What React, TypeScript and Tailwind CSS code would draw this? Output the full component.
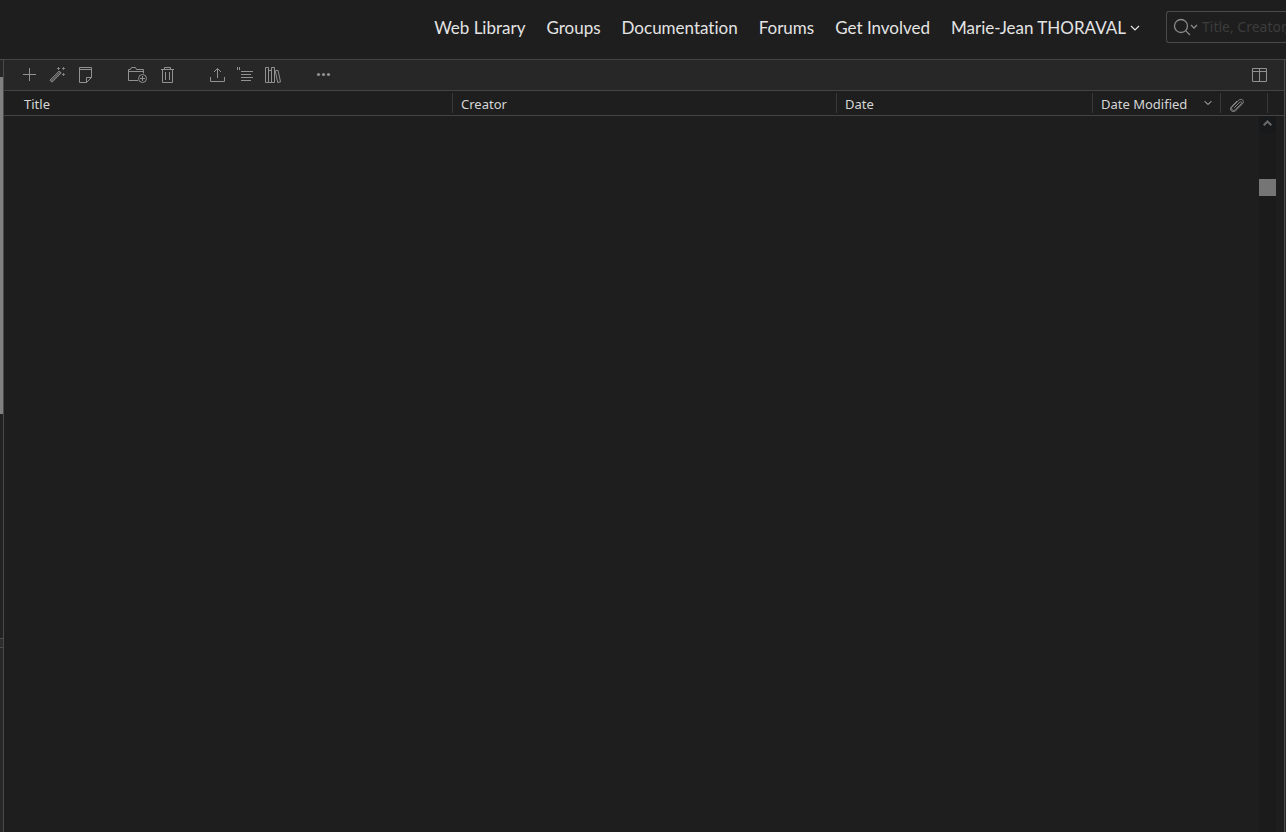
import type React from "react"
import { ChevronDown } from "lucide-react"

const navLinks = ["Web Library", "Groups", "Documentation", "Forums", "Get Involved"]

function Icon({ width = 16, children }: { width?: number; children: React.ReactNode }) {
  return (
    <svg
      width={width}
      height={16}
      viewBox={`0 0 ${width} 16`}
      fill="none"
      stroke="currentColor"
      className="shrink-0"
      aria-hidden="true"
    >
      {children}
    </svg>
  )
}

function ToolButton({ label, wide, children }: { label: string; wide?: boolean; children: React.ReactNode }) {
  return (
    <button
      type="button"
      aria-label={label}
      className={`${wide ? "w-8" : "w-7"} flex h-7 items-center justify-center hover:bg-white/5`}
    >
      {children}
    </button>
  )
}

function Header() {
  return (
    <header className="flex h-[59px] shrink-0 items-center justify-end pb-1">
      <nav className="flex items-center gap-[21px] font-['Lato',sans-serif] text-[17px] whitespace-nowrap text-[#e4e4e4] [font-variant-ligatures:none]">
        {navLinks.map((link) => (
          <a key={link} href="#" className="hover:text-white">
            {link}
          </a>
        ))}
        <button type="button" className="flex items-center gap-1">
          Marie-Jean THORAVAL
          <svg width="10" height="6" viewBox="0 0 10 6" fill="none" stroke="currentColor" strokeWidth="1.2">
            <path d="M1 1l4 4 4-4" />
          </svg>
        </button>
      </nav>

      <div className="mb-0.5 ml-[26px] flex h-8 w-[120px] items-center rounded-l-[3px] border border-r-0 border-[#4a4a4a] pl-1.5">
        <button type="button" aria-label="Search mode" className="flex shrink-0 items-center text-[#8a8a8a]">
          <svg width="25" height="18" viewBox="0 0 25 18" fill="none" stroke="currentColor" strokeWidth="1.3">
            <circle cx="8" cy="8" r="6.5" />
            <path d="M12.6 12.6L17 17M18 7l3 3 3-3" />
          </svg>
        </button>
        <input
          type="text"
          aria-label="Search"
          placeholder="Title, Creator, Year"
          className="ml-1 min-w-0 flex-1 bg-transparent font-['Noto_Sans',sans-serif] text-sm text-[#d0d0d0] outline-none placeholder:text-[#3c3c3c]"
        />
      </div>
    </header>
  )
}

function Toolbar() {
  return (
    <div className="flex h-8 items-center justify-between border-y border-[#444] bg-[#272727] pr-2.5 pl-[11px] text-[#919191]">
      <div className="flex gap-[22px]">
        <div className="flex">
          <ToolButton label="New Item">
            <Icon>
              <path d="M8.5 1v13M2 7.5h13" />
            </Icon>
          </ToolButton>
          <ToolButton label="Add by Identifier">
            <Icon>
              <path d="M1 13.2L10.2 4l2 2L3 15.2z" />
              <path d="M2.2 14L11 5.2" strokeWidth="1.4" opacity="0.65" />
              <path d="M8 1.5h3M9.5 0v3M13 1.5h3M14.5 0v3M13 7.5h3M14.5 6v3" strokeWidth="0.8" />
            </Icon>
          </ToolButton>
          <ToolButton label="New Note">
            <Icon>
              <path d="M2.5.5h12v10l-5 5h-7zM2.5 2.5h12M14.5 10.5h-5v5" />
            </Icon>
          </ToolButton>
        </div>

        <div className="flex">
          <ToolButton label="Add to Collection" wide>
            <Icon width={20}>
              <path d="M11 13.5H1.5v-11h2l1-2h4l1 2h7v4M1.5 4.5h15" />
              <circle cx="15.5" cy="11.5" r="4" />
              <path d="M13 11.5h5M15.5 9v5" />
            </Icon>
          </ToolButton>
          <ToolButton label="Move to Trash">
            <Icon>
              <path d="M2 2.5h13M5.5 2.5v-2h6v2M3.5 2.5v13h10v-13M6.5 5v8M10.5 5v8" />
            </Icon>
          </ToolButton>
        </div>

        <div className="flex">
          <ToolButton label="Export">
            <Icon>
              <path d="M1.5 10v4.5h14V10M8.5 11V1.5M5 5l3.5-3.5L12 5" />
            </Icon>
          </ToolButton>
          <ToolButton label="Create Citations">
            <Icon>
              <path d="M.5 0v3M2.5 0v3M4 4.5h12M4 7.5h10M4 10.5h12M4 13.5h10" />
            </Icon>
          </ToolButton>
          <ToolButton label="Create Bibliography">
            <Icon>
              <path d="M.5.5h3v15h-3zM3.5 3.5h3v12h-3zM6.5.5h3v15h-3zM10.2 3.8l2.8-.5 2.5 11.6-2.8.6z" />
            </Icon>
          </ToolButton>
        </div>

        <ToolButton label="More">
          <Icon>
            <g fill="currentColor" stroke="none">
              <circle cx="3.5" cy="7.5" r="1.6" />
              <circle cx="8.5" cy="7.5" r="1.6" />
              <circle cx="13.5" cy="7.5" r="1.6" />
            </g>
          </Icon>
        </ToolButton>
      </div>

      <ToolButton label="Column Selector">
        <Icon>
          <path d="M.5 1.5h14v13H.5zM.5 4.5h14M7.5 1.5v13" />
        </Icon>
      </ToolButton>
    </div>
  )
}

function ItemsTable() {
  return (
    <table className="w-full table-fixed border-collapse text-left text-[13px] text-[#d6d6d6]">
      <colgroup>
        <col className="w-[35%]" />
        <col className="w-[30%]" />
        <col className="w-[20%]" />
        <col className="w-[10%]" />
        <col />
        <col className="w-[17px]" />
      </colgroup>
      <thead>
        <tr className="h-6 border-b border-[#444]">
          <th className="p-0 font-normal">
            <div className="h-5 pl-5 leading-[22px]">Title</div>
          </th>
          <th className="p-0 font-normal">
            <div className="h-5 border-l border-[#383838] pl-2 leading-[22px]">Creator</div>
          </th>
          <th className="p-0 font-normal">
            <div className="h-5 border-l border-[#383838] pl-2 leading-[22px]">Date</div>
          </th>
          <th className="p-0 font-normal">
            <div className="flex h-5 items-start justify-between border-l border-[#383838] pr-1.5 pl-2 leading-[22px] whitespace-nowrap">
              Date Modified
              <ChevronDown size={12} className="mt-1" />
            </div>
          </th>
          <th className="p-0 font-normal" aria-label="Attachments">
            <div className="flex h-5 items-center border-l border-[#383838] pt-1 pl-2 text-[#919191]">
              <Icon>
                <path
                  d="M5.2 10.8l5.6-5.6c1.1-1.1 2.6.3 1.5 1.4l-6.2 6.2c-2 2-4.9-.9-2.9-2.9l6.6-6.6c2.7-2.7 6.2.8 3.7 3.5l-6.8 6.8c-3.2 2.8-6.8-.8-4.3-3.9l5.8-5.8"
                  strokeWidth="0.9"
                />
              </Icon>
            </div>
          </th>
          <th className="p-0">
            <div className="h-5 border-l border-[#383838]" />
          </th>
        </tr>
      </thead>
      <tbody />
    </table>
  )
}

export default function App() {
  return (
    <div className="flex h-screen flex-col overflow-hidden bg-[#1e1e1e] font-['Noto_Sans',sans-serif]">
      <Header />

      <div className="flex min-h-0 flex-1">
        {/* edge of the collections pane and its scrollbar */}
        <aside className="flex w-1 shrink-0 flex-col border-t border-r border-[#4a4a4a]">
          <div className="h-[17px] bg-[#272727]" />
          <div className="h-[337px] bg-[#808080]" />
          <div className="h-56 bg-[#222]" />
          <div className="h-2.5 border-y border-[#4a4a4a] bg-[#2d2d2d]" />
          <div className="flex-1 bg-[#272727]" />
        </aside>

        <main className="flex min-w-0 flex-1 flex-col">
          <Toolbar />
          <ItemsTable />
          <div className="flex flex-1 justify-end pr-2">
            <div className="flex w-[17px] flex-col bg-[#1b1b1b]">
              <button
                type="button"
                aria-label="Scroll up"
                className="flex h-[17px] items-center justify-center bg-[#18191a] pb-0.5 text-[#6a6a6a]"
              >
                <svg width="9" height="6" viewBox="0 0 9 6" fill="none" stroke="currentColor" strokeWidth="2">
                  <path d="M.7 5.3l3.8-3.8 3.8 3.8" />
                </svg>
              </button>
              <div className="mt-[46px] h-[17px] bg-[#757575]" />
            </div>
          </div>
        </main>

        <aside className="w-0.5 shrink-0 border-t border-l border-[#4a4a4a] bg-[#272727]" />
      </div>
    </div>
  )
}
